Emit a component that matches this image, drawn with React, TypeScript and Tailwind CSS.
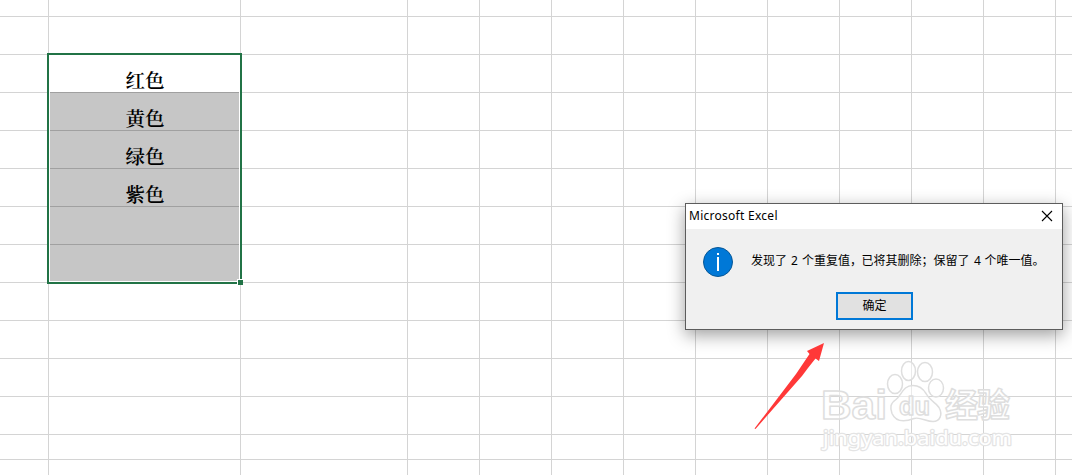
const COLUMNS = [49, 192, 167, 72, 72, 72, 72, 72, 72, 72, 72, 72, 24];
const ROWS = [17, 38, 38, 38, 38, 38, 38, 38, 38, 38, 38, 38, 25, 24];
const VALUES = ["红色", "黄色", "绿色", "紫色", "", ""];

function Sheet() {
  return (
    <div className="flex h-full w-full flex-col overflow-hidden">
      {ROWS.map((height, row) => (
        <div key={row} className="flex shrink-0" style={{ height }}>
          {COLUMNS.map((width, col) => (
            <div
              key={col}
              className="shrink-0 border-r border-b border-[#d4d4d4]"
              style={{ width }}
            />
          ))}
        </div>
      ))}
    </div>
  );
}

function Selection() {
  return (
    <div className="absolute top-[53px] left-[47px] flex h-[231px] w-[195px] flex-col border-2 border-[#217346] bg-white px-px pb-px">
      {VALUES.map((value, i) => (
        <div
          key={i}
          className={
            i === 0
              ? "flex h-[37px] shrink-0 items-end justify-center"
              : "flex h-[38px] shrink-0 items-end justify-center border-t border-[#a0a0a0] bg-[#c6c6c6] nth-[6]:h-[37px]"
          }
        >
          <span className="mb-[-1px] pl-px font-['Noto_Serif_CJK_SC','Noto_Sans_CJK_SC',serif] text-[19.5px] leading-[25px] font-semibold text-black">
            {value}
          </span>
        </div>
      ))}
      {/* Fill handle */}
      <div className="absolute right-[-3px] bottom-[-3px] h-[6px] w-[6px] border-t border-l border-white bg-[#217346]" />
    </div>
  );
}

function Watermark() {
  return (
    <svg
      className="absolute top-[355px] left-[815px]"
      width="210"
      height="105"
      fill="#ffffff"
      fillOpacity="0.5"
      stroke="#dedede"
      strokeWidth="1.5"
      strokeLinejoin="round"
    >
      <text x="6" y="64" textLength="66" lengthAdjust="spacingAndGlyphs" fontSize="41" fontWeight="700" fontFamily="Liberation Sans, sans-serif">Bai</text>
      <ellipse cx="80" cy="29" rx="7.5" ry="9.5" />
      <ellipse cx="93.5" cy="16" rx="7" ry="9.5" />
      <ellipse cx="110" cy="17" rx="7.5" ry="9.5" />
      <ellipse cx="121" cy="33" rx="7.5" ry="9" />
      <path d="M98 30.500c-10 0-11 9-17 14-6 4-6 8-4 14 4 9 14 8 22 5 6-2 12 3 19 3 7 0 10-7 6-14-4-6-9-6-13-14-3-5-7-8-13-8z" />
      <text x="84" y="60" textLength="31" lengthAdjust="spacingAndGlyphs" fontSize="26" fontWeight="700" fontFamily="Liberation Sans, sans-serif">du</text>
      <text x="130" y="62" textLength="65" fontSize="33" fontWeight="700" fontFamily="Noto Sans CJK SC, sans-serif">经验</text>
      <text x="8" y="90" textLength="189" lengthAdjust="spacingAndGlyphs" fontSize="20.5" strokeWidth="2.4" stroke="#e4e4e4" fillOpacity="1" paintOrder="stroke" fontFamily="Noto Sans, sans-serif">jingyan.baidu.com</text>
    </svg>
  );
}

function Dialog() {
  return (
    <div className="absolute top-[203px] left-[685px] flex h-[127px] w-[378px] flex-col border border-[#5c5c5c] bg-[#f0f0f0] font-['Noto_Sans','Noto_Sans_CJK_SC',sans-serif] text-[12px] text-black shadow-[0_5px_16px_rgba(0,0,0,0.38)]">
      <div className="flex h-[25px] shrink-0 items-center justify-between bg-white pr-[9px] pb-[2px] pl-[3px]">
        <span className="tracking-[0.27px]">Microsoft Excel</span>
        <svg width="12" height="12" fill="none" stroke="#000" strokeWidth="1.1">
          <path d="M1 1 11 11M11 1 1 11" />
        </svg>
      </div>
      <div className="flex h-[63px] shrink-0 items-center pt-[2px] pl-[17px]">
        <svg width="30" height="30" viewBox="0 0 30 30">
          <circle cx="15" cy="15" r="14.5" fill="#0078d7" stroke="#075796" />
          <path d="M14 6h2v2h-2zM14 10h2v14h-2z" fill="#fff" />
        </svg>
        <svg className="ml-[16px]" width="298" height="24">
          <text y="15" fontSize="12">
            <tspan x="2">发现了</tspan>
            <tspan x="42">2</tspan>
            <tspan x="53">个重复值，</tspan>
            <tspan x="112.5">已将其删除；</tspan>
            <tspan x="184.5">保留了</tspan>
            <tspan x="225">4</tspan>
            <tspan x="235.5">个唯一值。</tspan>
          </text>
        </svg>
      </div>
      <button className="ml-[150px] h-[28px] w-[77px] border-2 border-[#0078d7] bg-[#e1e1e1]">
        确定
      </button>
    </div>
  );
}

export default function App() {
  return (
    <main className="relative h-[475px] w-[1072px] overflow-hidden bg-white">
      <Sheet />
      <Selection />
      <Watermark />
      <Dialog />
      <svg className="absolute top-[340px] left-[750px]" width="80" height="94">
        <path d="M4.500 88.500 46 34 59.500 14 57 11 74 3 69 21 65.500 18.500 58 28 52 36 5.500 89z" fill="#ff3838" />
      </svg>
    </main>
  );
}
